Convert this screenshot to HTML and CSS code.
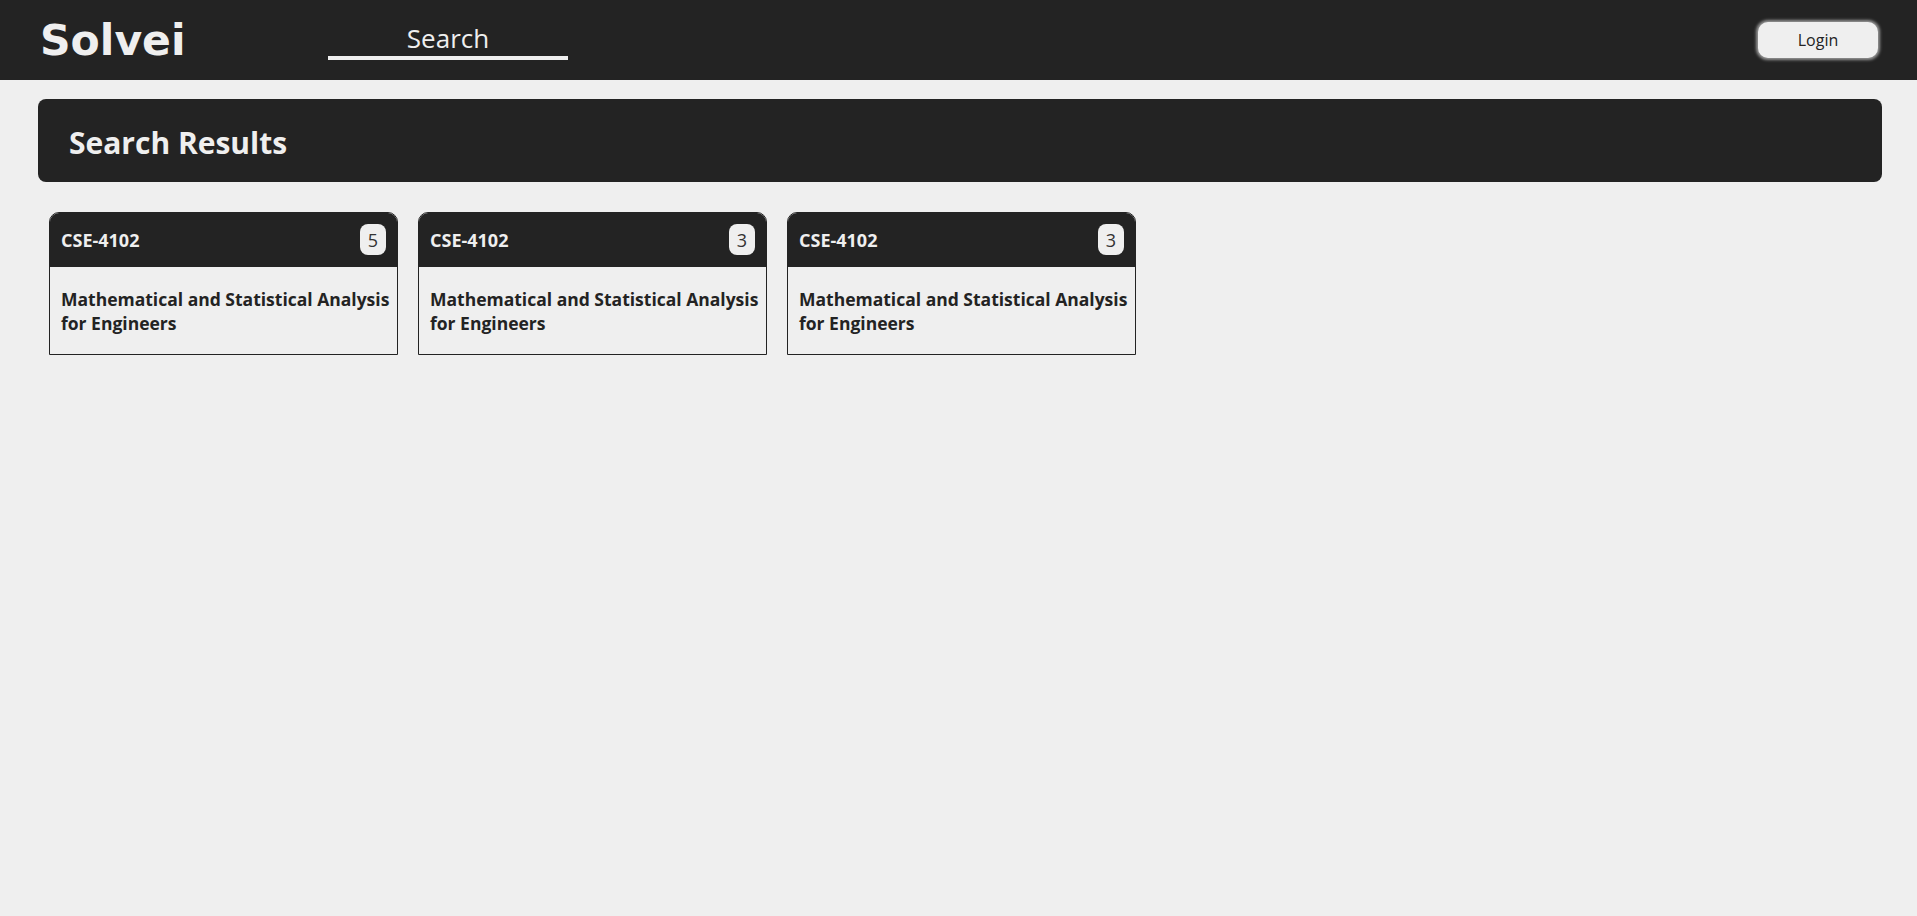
FILE: index.html
```html
<!DOCTYPE html>
<html lang="en">
<head>
	<meta charset="UTF-8" />
	<meta name="viewport" content="width=device-width, initial-scale=1" />

	<title>Solvei - Search</title>

	<link rel="stylesheet" href="styles.css">
</head>
<body>
	<div class="navbar">
		<div class="logo">Solvei</div>
		<input class="search" type="text" placeholder="Search" />
		<button class="login">Login</button>
	</div>

	<div class="main">
		<div class="banner">
			<h2>Search Results</h2>
		</div>

		<div class="results">
			<div class="course">
				<div class="course_head">
					<div class="code">CSE-4102</div>
					<div class="count">5</div>
				</div>
				<div class="course_title">Mathematical and Statistical Analysis for Engineers</div>
			</div>
			<div class="course">
				<div class="course_head">
					<div class="code">CSE-4102</div>
					<div class="count">3</div>
				</div>
				<div class="course_title">Mathematical and Statistical Analysis for Engineers</div>
			</div>
			<div class="course">
				<div class="course_head">
					<div class="code">CSE-4102</div>
					<div class="count">3</div>
				</div>
				<div class="course_title">Mathematical and Statistical Analysis for Engineers</div>
			</div>
		</div>
	</div>
</body>
</html>
```

FILE: styles.css
```css
body{
	margin: 0;
	background-color: #efefef;
	font-family: "Open Sans", "Noto Sans", sans-serif;
	color: #232323;
}

.navbar{
	display: flex;
	align-items: center;
	height: 80px;
	padding: 0 39px 0 40px;
	background-color: #232323;
}

.logo{
	flex: 0 0 288px;
	font-family: "DejaVu Sans", Verdana, sans-serif;
	font-weight: bold;
	font-size: 42.5px;
	color: #efefef;
}

.search{
	width: 240px;
	padding: 0;
	border: none;
	border-bottom: 4px solid #efefef;
	background: transparent;
	color: #efefef;
	font-family: "Open Sans", sans-serif;
	font-size: 26px;
	text-align: center;
	outline: none;
}

.search::placeholder{
	color: #efefef;
}

.login{
	margin-left: auto;
	width: 120px;
	height: 36px;
	border: none;
	border-radius: 10px;
	background-color: #efefef;
	box-shadow: 0 0 3px 2px rgba(200, 200, 200, 0.7);
	color: #232323;
	font-family: "Open Sans", sans-serif;
	font-size: 16px;
}

.main{
	padding: 19px 35px 0 38px;
}

.banner{
	padding: 23px 30px 19px 31px;
	border-radius: 8px;
	background-color: #232323;
}

.banner > h2{
	margin: 0;
	font-size: 30px;
	color: #efefef;
}

.results{
	display: flex;
	gap: 20px;
	padding: 30px 11px;
}

.course{
	box-sizing: border-box;
	width: 349px;
	border: 1px solid #232323;
	border-radius: 10px 10px 0 0;
}

.course_head{
	display: flex;
	align-items: center;
	justify-content: space-between;
	padding: 11px 11px 12px 11px;
	border-radius: 9px 9px 0 0;
	background-color: #232323;
}

.code{
	color: #efefef;
	font-weight: bold;
	font-size: 18px;
}

.count{
	display: flex;
	align-items: center;
	justify-content: center;
	min-width: 26px;
	height: 31px;
	border-radius: 8px;
	background-color: #efefef;
	color: #333;
	font-size: 18px;
}

.course_title{
	padding: 20px 6px 19px 11px;
	font-weight: bold;
	font-size: 17.5px;
}
```
